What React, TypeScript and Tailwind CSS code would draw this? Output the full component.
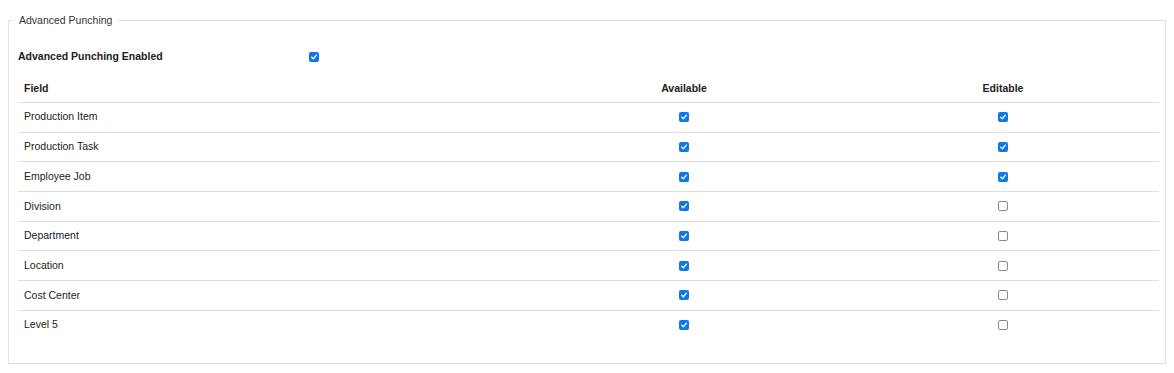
const rows = [
  { field: 'Production Item', available: true, editable: true },
  { field: 'Production Task', available: true, editable: true },
  { field: 'Employee Job', available: true, editable: true },
  { field: 'Division', available: true, editable: false },
  { field: 'Department', available: true, editable: false },
  { field: 'Location', available: true, editable: false },
  { field: 'Cost Center', available: true, editable: false },
  { field: 'Level 5', available: true, editable: false },
]

function Check({ checked }: { checked: boolean }) {
  if (!checked) {
    return <span className="block w-[10px] h-[10px] rounded-[2px] border border-[#8a8a8a] bg-white" />
  }
  return (
    <span className="flex items-center justify-center w-[10px] h-[10px] rounded-[2px] bg-[#0f78e6]">
      <svg viewBox="0 0 10 10" className="w-[8px] h-[8px]" fill="none">
        <path d="M2 5.2 L4.1 7.2 L8 2.6" stroke="white" strokeWidth="1.6" strokeLinecap="round" strokeLinejoin="round" />
      </svg>
    </span>
  )
}

export default function App() {
  return (
    <div className="px-2 pt-[13px] pb-[9px] bg-white text-[10.5px] text-[#222] font-['Liberation_Sans',Arial,sans-serif]">
      <fieldset className="border border-[#e2e2e2] pl-[9px] pr-[6px] pb-[23px]">
        <legend className="-ml-[5px] px-[6px] leading-[14px] text-[#333]">Advanced Punching</legend>
        <div className="flex items-center h-[15px] mt-[22px]">
          <span className="w-[291px] font-bold">Advanced Punching Enabled</span>
          <Check checked />
        </div>
        <div className="mt-[8px]">
          <div className="flex items-center h-[30px] pt-[3px] font-bold">
            <div className="w-[500px] pl-[6px]">Field</div>
            <div className="w-[332px] text-center">Available</div>
            <div className="w-[306px] text-center">Editable</div>
          </div>
          {rows.map((r) => (
            <div key={r.field} className="flex items-center h-[29.7px] border-t border-[#dedede]">
              <div className="w-[500px] pl-[6px]">{r.field}</div>
              <div className="w-[332px] flex justify-center">
                <Check checked={r.available} />
              </div>
              <div className="w-[306px] flex justify-center">
                <Check checked={r.editable} />
              </div>
            </div>
          ))}
        </div>
      </fieldset>
    </div>
  )
}
